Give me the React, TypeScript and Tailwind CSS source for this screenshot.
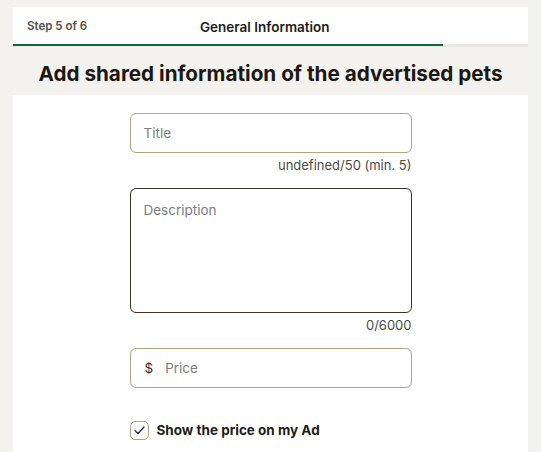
import { useState } from 'react'

export default function App() {
  const [showPrice, setShowPrice] = useState(true)

  return (
    <div className="min-h-[452px] bg-[#f3f2ee] px-[13px] pt-[7px]" style={{ fontFamily: 'Inter, "Liberation Sans", sans-serif' }}>
      {/* step header */}
      <div className="bg-white">
        <div className="flex h-[37px] items-center px-[14px] pt-[3px]">
          <span className="w-[173px] text-[11.5px] font-semibold text-[#555049]">Step 5 of 6</span>
          <span className="text-[13.5px] font-semibold text-[#1c1b19]">General Information</span>
        </div>
        <div className="h-[3px] bg-[#ebe9e4]">
          <div className="h-[2px] w-[83.4%] bg-[#0b6b3a]" />
        </div>
      </div>

      <h1 className="pt-[13px] pb-[7px] text-center text-[20.7px] leading-[28px] font-bold text-[#1b1712]">
        Add shared information of the advertised pets
      </h1>

      {/* form */}
      <div className="bg-white pt-[18px] pb-[20px]">
        <div className="mx-auto w-[282px]">
          <input
            placeholder="Title"
            className="h-[40px] w-full rounded-[6px] border border-[#b3a37f] px-[13px] text-[13.5px] text-[#333] placeholder:text-[#7b7d80] outline-none"
          />
          <div className="mt-[4px] text-right text-[13px] leading-[16px] text-[#4e4b47]">undefined/50 (min. 5)</div>

          <textarea
            placeholder="Description"
            className="mt-[15px] block h-[125px] w-full resize-none rounded-[6px] border border-[#3c3328] px-[13px] py-[11px] text-[13.5px] text-[#333] placeholder:text-[#7b7d80] outline-none"
          />
          <div className="mt-[4px] text-right text-[13px] leading-[16px] text-[#4e4b47]">0/6000</div>

          <div className="mt-[15px] flex h-[40px] items-center rounded-[6px] border border-[#b3a37f] px-[14px]">
            <span className="text-[13.5px] text-[#3a2a1a]">$</span>
            <input placeholder="Price" className="ml-[12px] w-full text-[13.5px] text-[#333] placeholder:text-[#7b7d80] outline-none" />
          </div>

          <label className="mt-[32px] flex cursor-pointer items-center gap-[8px]">
            <span
              onClick={() => setShowPrice(!showPrice)}
              className="flex h-[19px] w-[19px] items-center justify-center rounded-[5px] border border-[#b3a37f]"
            >
              {showPrice && (
                <svg width="11" height="9" viewBox="0 0 11 9" fill="none">
                  <path d="M1 4.6L4 7.5L10 1" stroke="#1d2a4f" strokeWidth="1.3" strokeLinecap="round" strokeLinejoin="round" />
                </svg>
              )}
            </span>
            <span className="text-[13.5px] font-bold text-[#1c1b19]">Show the price on my Ad</span>
          </label>
        </div>
      </div>
    </div>
  )
}
